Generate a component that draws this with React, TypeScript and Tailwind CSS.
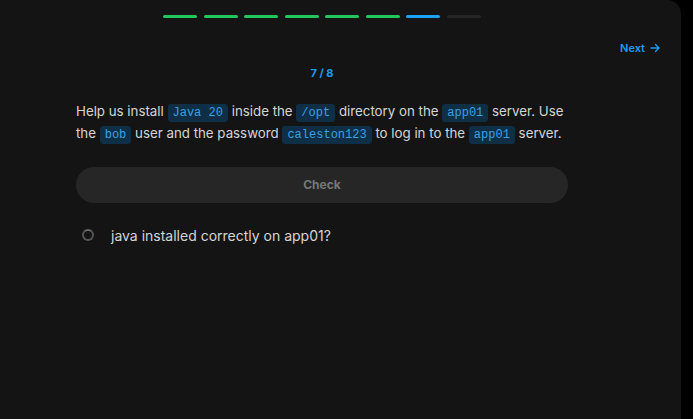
import React from 'react';

const STEPS = 8;
const CURRENT = 7;

function Code({ children }: { children: React.ReactNode }) {
  return (
    <code className="rounded-[3px] bg-[#0e2f45] px-[5px] py-[2px] font-['Liberation_Mono',monospace] text-[12px] leading-[14px] text-[#3ba1e6]">
      {children}
    </code>
  );
}

export default function App() {
  return (
    <div className="flex h-[419px] w-[693px] bg-black font-['Inter',sans-serif]">
      <div className="relative flex h-full w-[681px] flex-col rounded-tr-[14px] bg-[#141414] pr-[37px]">
        {/* progress */}
        <div className="mt-[15px] flex justify-center gap-[6.6px]">
          {Array.from({ length: STEPS }).map((_, i) => (
            <div
              key={i}
              className={`h-[3px] w-[34px] rounded-full ${
                i < CURRENT - 1 ? 'bg-[#22c55e]' : i === CURRENT - 1 ? 'bg-[#1da1f2]' : 'bg-[#262626]'
              }`}
            />
          ))}
        </div>

        <button className="absolute right-[21px] top-[40px] flex items-center gap-[5px] text-[11px] font-semibold text-[#1d9bf0]">
          Next
          <svg width="10" height="10" viewBox="0 0 10 10" fill="none" stroke="currentColor" strokeWidth="1.4" strokeLinecap="round" strokeLinejoin="round">
            <path d="M1 5h8M5.5 1.5 9 5 5.5 8.5" />
          </svg>
        </button>

        <div className="mx-auto mt-[47px] flex w-[492px] flex-col">
          <div className="text-center text-[11px] font-bold text-[#1d9bf0]">
            {CURRENT} / {STEPS}
          </div>

          <p className="mt-[18px] w-[510px] text-[13.3px] leading-[22px] text-[#d4d4d4]">
            Help us install <Code>Java 20</Code> inside the <Code>/opt</Code> directory on the <Code>app01</Code> server. Use the <Code>bob</Code> user and the password <Code>caleston123</Code> to log in to the <Code>app01</Code> server.
          </p>

          <button className="mt-[23px] h-[36px] w-full rounded-full bg-[#262626] text-[12px] font-bold text-[#777777]">
            Check
          </button>

          <div className="mt-[22px] flex items-center gap-[17px] pl-[6px]">
            <span className="h-[12px] w-[12px] rounded-full border-[2px] border-[#555555] border-t-[#6a6a6a]" />
            <span className="text-[14px] text-[#d4d4d4]">java installed correctly on app01?</span>
          </div>
        </div>
      </div>
    </div>
  );
}
